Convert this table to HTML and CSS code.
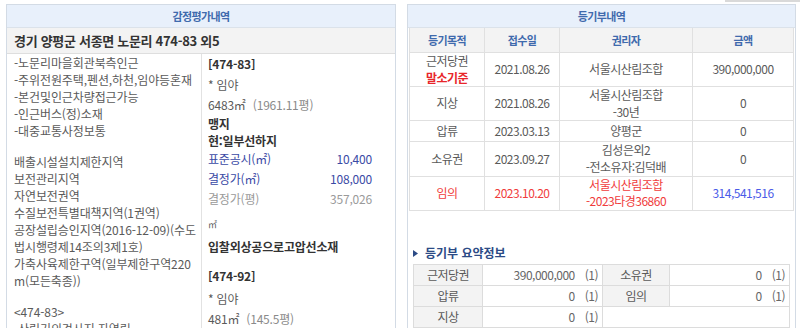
FILE: index.html
```html
<!DOCTYPE html>
<html lang="ko">
<head>
<meta charset="utf-8">
<title>감정평가 / 등기부</title>
<link rel="stylesheet" href="styles.css">
</head>
<body>
<div class="topbar"><div class="topbtn"></div></div>
<div class="wrap">
  <section class="panel pleft">
    <div class="ph">감정평가내역</div>
    <div class="addr">경기 양평군 서종면 노문리 474-83 외5</div>
    <div class="cols">
      <div class="desc">
        <div class="blk">
          -노문리마을회관북측인근<br>
          -주위전원주택,펜션,하천,임야등혼재<br>
          -본건및인근차량접근가능<br>
          -인근버스(정)소재<br>
          -대중교통사정보통
        </div>
        <div class="blk gap">
          배출시설설치제한지역<br>
          보전관리지역<br>
          자연보전권역<br>
          수질보전특별대책지역(1권역)<br>
          공장설립승인지역(2016-12-09)(수도<br>
          법시행령제14조의3제1호)<br>
          가축사육제한구역(일부제한구역220<br>
          m(모든축종))
        </div>
        <div class="blk gap">
          &lt;474-83&gt;<br>
          -산림기의경사지,자연림
        </div>
      </div>
      <div class="info">
        <div class="lot">[474-83]</div>
        <div class="ln">* 임야</div>
        <div class="ln area">6483㎡ <span class="py">(1961.11평)</span></div>
        <div class="bold">맹지</div>
        <div class="bold">현:일부선하지</div>
        <div class="price blue"><span>표준공시(㎡)</span><span>10,400</span></div>
        <div class="price blue"><span>결정가(㎡)</span><span>108,000</span></div>
        <div class="price gray"><span>결정가(평)</span><span>357,026</span></div>
        <div class="unit">㎡</div>
        <div class="bold note">입찰외상공으로고압선소재</div>
        <div class="lot lot2">[474-92]</div>
        <div class="ln ln2">* 임야</div>
        <div class="ln area">481㎡ <span class="py">(145.5평)</span></div>
      </div>
    </div>
  </section>
  <section class="panel pright">
    <div class="ph">등기부내역</div>
    <div class="reg">
      <div class="th">등기목적</div>
      <div class="th">접수일</div>
      <div class="th">권리자</div>
      <div class="th">금액</div>

      <div class="td">근저당권<br><b class="base">말소기준</b></div>
      <div class="td">2021.08.26</div>
      <div class="td">서울시산림조합</div>
      <div class="td">390,000,000</div>

      <div class="td">지상</div>
      <div class="td">2021.08.26</div>
      <div class="td">서울시산림조합<br>-30년</div>
      <div class="td">0</div>

      <div class="td">압류</div>
      <div class="td">2023.03.13</div>
      <div class="td">양평군</div>
      <div class="td">0</div>

      <div class="td">소유권</div>
      <div class="td">2023.09.27</div>
      <div class="td">김성은외2<br>-전소유자:김덕배</div>
      <div class="td">0</div>

      <div class="td red">임의</div>
      <div class="td red">2023.10.20</div>
      <div class="td red">서울시산림조합<br>-2023타경36860</div>
      <div class="td amt">314,541,516</div>
    </div>

    <h3 class="sumtitle"><svg class="tri" width="5" height="7" viewBox="0 0 5 7"><path d="M0 0L5 3.5L0 7Z" fill="#2c4b86"/></svg>등기부 요약정보</h3>
    <div class="sum">
      <div class="sl">근저당권</div>
      <div class="sv">390,000,000<span class="cnt">(1)</span></div>
      <div class="sl">소유권</div>
      <div class="sv">0<span class="cnt">(1)</span></div>

      <div class="sl">압류</div>
      <div class="sv">0<span class="cnt">(1)</span></div>
      <div class="sl">임의</div>
      <div class="sv">0<span class="cnt">(1)</span></div>

      <div class="sl">지상</div>
      <div class="sv">0<span class="cnt">(1)</span></div>
      <div class="sv span2"></div>
    </div>
  </section>
</div>
</body>
</html>
```

FILE: styles.css
```css
* { box-sizing: border-box; }

html, body {
  margin: 0;
  height: 328px;
  overflow: hidden;
  background: #fff;
}

body {
  font-family: "Noto Sans CJK KR", "Noto Sans", sans-serif;
  font-size: 12px;
  letter-spacing: -0.5px;
  color: #555;
}

.topbar {
  height: 4px;
  display: flex;
  justify-content: flex-end;
}

.topbtn {
  width: 75px;
  height: 2px;
  background: #d9d9d9;
}

.wrap {
  display: flex;
  gap: 11px;
  padding-left: 6px;
}

.panel {
  border: 1px solid #d3dbe5;
  height: 420px;
  overflow: hidden;
  background: #fff;
}

.pleft { width: 390px; }
.pright { width: 389px; }

.ph {
  height: 23px;
  line-height: 22px;
  background: #e8f0fb;
  border-bottom: 1px solid #dbe2ea;
  text-align: center;
  font-size: 11px;
  font-weight: bold;
  letter-spacing: -0.6px;
  color: #3f6aad;
}

.addr {
  height: 26px;
  line-height: 25px;
  background: #f3f3f3;
  border-bottom: 1px solid #dedede;
  padding-left: 7px;
  font-size: 13px;
  font-weight: bold;
  letter-spacing: -0.3px;
  color: #333;
}

.cols {
  display: flex;
}

.desc {
  width: 195px;
  flex: none;
  border-right: 1px solid #e2e2e2;
  padding-left: 7px;
  line-height: 17px;
  letter-spacing: -0.1px;
  white-space: nowrap;
  color: #5a5a5a;
  min-height: 400px;
}

.blk.gap { margin-top: 14px; }

.info {
  flex: 1;
  padding-left: 6px;
  padding-right: 23px;
  white-space: nowrap;
  letter-spacing: -0.2px;
  color: #5a5a5a;
}

.lot {
  height: 20px;
  line-height: 20px;
  font-weight: bold;
  color: #333;
}

.ln {
  height: 21px;
  line-height: 21px;
}

.ln.area { height: 20px; line-height: 20px; }

.py { color: #8a8a8a; margin-left: 4px; }

.bold {
  height: 17px;
  line-height: 17px;
  font-weight: bold;
  color: #333;
}

.price {
  display: flex;
  justify-content: space-between;
  height: 20px;
  line-height: 20px;
}

.price.blue { color: #3a4aa5; }
.price.gray { color: #9a9a9a; }

.unit {
  margin-top: 6px;
  height: 20px;
  line-height: 20px;
  font-size: 9px;
}

.note {
  margin-top: 2px;
  height: 20px;
  line-height: 20px;
}

.lot2 { margin-top: 8px; height: 21px; line-height: 21px; }

.ln2 { margin-top: 2px; }

/* 등기부 table */
.reg {
  display: grid;
  grid-template-columns: 75px 75px 133px 101px;
  margin: 0 2px 0 1px;
  border-left: 1px solid #e0e0e0;
}

.th, .td {
  display: flex;
  flex-direction: column;
  justify-content: center;
  align-items: center;
  text-align: center;
  border-right: 1px solid #e0e0e0;
  border-bottom: 1px solid #e0e0e0;
}

.th {
  min-height: 25px;
  background: #f3f3f3;
  font-size: 11px;
  font-weight: bold;
  letter-spacing: -0.6px;
  color: #3f6aad;
}

.td {
  min-height: 21px;
  line-height: 16.6px;
  color: #5a5a5a;
}

.base { color: #e8262a; font-weight: bold; }

.td.red { color: #f03c3c; }
.td.amt { color: #4a5be8; }

.sumtitle {
  margin: 32px 0 0 5px;
  height: 21px;
  line-height: 20px;
  font-size: 12px;
  font-weight: bold;
  letter-spacing: 0;
  color: #2c4b86;
  display: flex;
  align-items: center;
}

.tri { margin-right: 7px; }

.sum {
  display: grid;
  grid-template-columns: 69px 120px 67px 120px;
  margin: 0 5px;
  border-left: 1px solid #dcdcdc;
  border-top: 1px solid #dcdcdc;
}

.sl, .sv {
  height: 21px;
  line-height: 20px;
  border-right: 1px solid #dcdcdc;
  border-bottom: 1px solid #dcdcdc;
}

.sl {
  background: #f3f3f3;
  text-align: center;
  color: #5a5a5a;
}

.sv {
  text-align: right;
  padding-right: 4px;
  color: #666;
}

.cnt { margin-left: 10px; }

.span2 { grid-column: span 2; }
```
